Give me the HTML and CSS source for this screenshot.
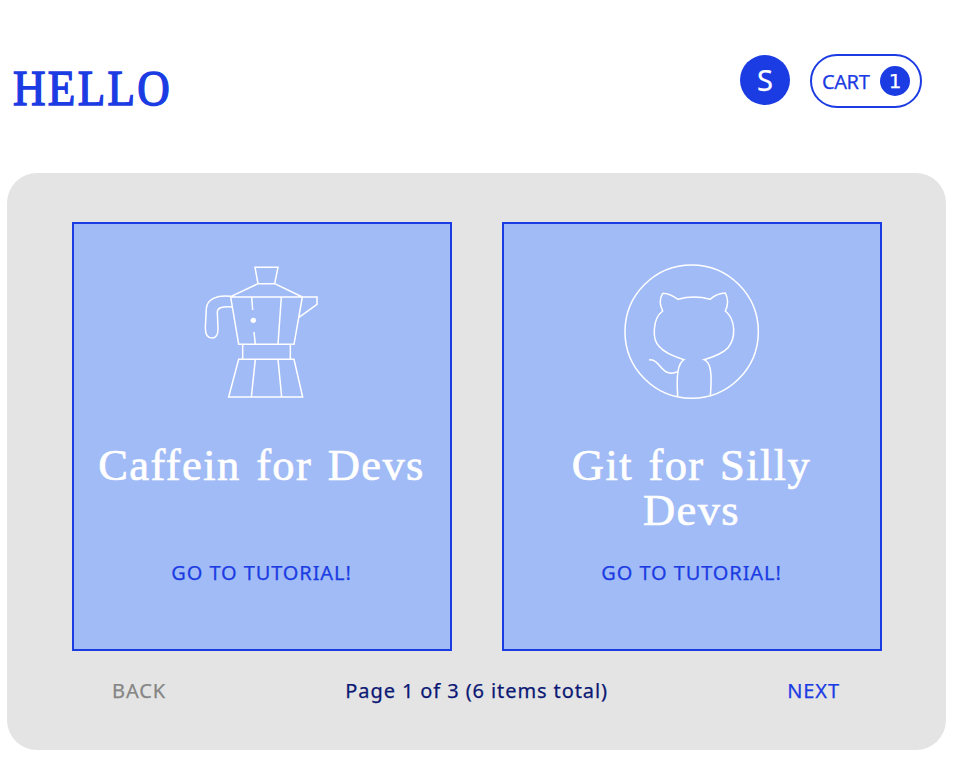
FILE: index.html
```html
<!DOCTYPE html>
<html lang="en">
<head>
<meta charset="utf-8">
<title>Hello</title>
<link rel="stylesheet" href="styles.css">
</head>
<body>
<header class="header">
  <h1 class="brand">HELLO</h1>
  <div class="actions">
    <div class="avatar"><span>S</span></div>
    <div class="cart"><span class="cart-label">CART</span><span class="count">1</span></div>
  </div>
</header>
<main class="panel">
  <section class="cards">
    <article class="card">
      <svg class="icon pot" viewBox="0 0 420 465" width="140" height="155" aria-hidden="true">
        <path d="M195 37H264L254 86H204Z M204 86L122 125 M254 86L337 126 M122 126H381V148L327 187 M122 126L146 268H312L337 126 M185 126L188 165 M192 231L196 268 M274 126L264 268 M158 268V313 M301 268V313 M146 313H312L338 426H116Z M196 313L184 426 M264 313L275 426 M122 124C80 119 51 133 49 160L46 218C46 236 52 249 66 249C78 249 84 240 84 222L82 172C82 157 99 154 127 156"/>
        <circle class="dot" cx="190" cy="196" r="8"/>
      </svg>
      <h2 class="title">Caffein for Devs</h2>
      <a class="link">GO TO TUTORIAL!</a>
    </article>
    <article class="card">
      <svg class="icon cat" viewBox="0 0 465 465" width="155" height="155" aria-hidden="true">
        <circle cx="230" cy="230" r="200"/>
        <path d="M143 115C134 130 134 150 143 168C111 192 112 254 132 274C150 296 180 306 207 314C188 326 184 360 188 424 M143 115C160 115 176 124 189 133C220 124 255 124 285 133C300 120 315 114 331 114C340 132 340 150 331 168C363 194 363 250 339 278C322 297 294 306 267 314C287 322 292 352 286 424 M102 315C118 311 129 326 141 340C156 358 173 357 188 350"/>
      </svg>
      <h2 class="title">Git for Silly<br>Devs</h2>
      <a class="link">GO TO TUTORIAL!</a>
    </article>
  </section>
  <nav class="pager">
    <span class="back">BACK</span>
    <span class="status">Page 1 of 3 (6 items total)</span>
    <a class="next">NEXT</a>
  </nav>
</main>
</body>
</html>
```
FILE: styles.css
```css
* { box-sizing: border-box; }
body {
  margin: 0;
  height: 784px;
  background: #fff;
  color: #1b3be3;
  font-family: "Noto Sans", sans-serif;
  font-size: 20px;
  -webkit-text-stroke: 0.25px currentColor;
}
h1, h2 { margin: 0; font-family: "Liberation Serif", serif; font-weight: 400; }
.header {
  height: 173px;
  display: flex;
  justify-content: space-between;
  align-items: flex-start;
  padding: 54px 31px 0 13px;
}
.brand {
  font-size: 50px;
  line-height: 58px;
  margin-top: 5px;
  letter-spacing: 2.6px;
  transform: scaleX(0.9);
  transform-origin: left;
  -webkit-text-stroke: 1.4px #1b3be3;
}
.actions { display: flex; gap: 20px; }
.avatar {
  width: 50px;
  height: 50px;
  margin-top: 0.5px;
  border-radius: 50%;
  background: #1b3be3;
  color: #fff;
  display: flex;
  align-items: center;
  justify-content: center;
  font-size: 29px;
  line-height: 50px;
}
.cart {
  width: 112px;
  height: 54px;
  border: 2px solid #1b3be3;
  border-radius: 27px;
  display: flex;
  align-items: center;
  justify-content: space-between;
  padding: 0 10px;
}
.cart-label { letter-spacing: -0.4px; }
.count {
  width: 30px;
  height: 30px;
  border-radius: 50%;
  background: #1b3be3;
  color: #fff;
  text-align: center;
  line-height: 31px;
  font-family: "DejaVu Sans", sans-serif;
}
.panel {
  margin: 0 7px;
  height: 577px;
  border-radius: 30px;
  background: #e4e4e4;
  padding-top: 49px;
}
.cards { display: flex; justify-content: center; gap: 50px; }
.card {
  width: 380px;
  height: 429px;
  border: 2px solid #1b3be3;
  background: #a1bbf6;
  display: flex;
  flex-direction: column;
  align-items: center;
  padding-top: 31px;
}
.icon { height: 155px; fill: none; stroke: #fff; stroke-width: 4.5; }
.icon .dot { fill: #fff; stroke: none; }
.pot { margin-right: 4px; }
.cat { margin-left: 2px; }
.title {
  margin-top: 33px;
  height: 89px;
  color: #fff;
  font-size: 44.5px;
  line-height: 44.5px;
  letter-spacing: 1.4px;
  word-spacing: 3px;
  text-align: center;
  white-space: nowrap;
  -webkit-text-stroke: 0.7px #fff;
}
.link { margin-top: 26px; line-height: 30px; letter-spacing: 0.9px; }
.pager {
  display: flex;
  justify-content: space-between;
  padding: 25px 106px 0 105px;
  line-height: 30px;
  letter-spacing: 0.9px;
}
.back { color: #858585; }
.status { color: #0b1974; }
```
